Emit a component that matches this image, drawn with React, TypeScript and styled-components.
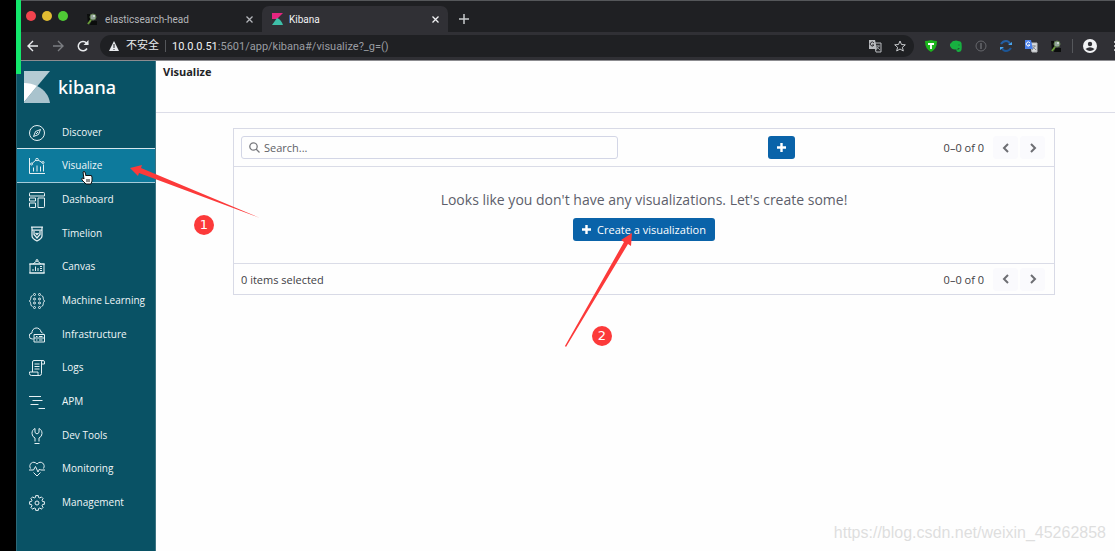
import React from 'react';
import styled, { createGlobalStyle, css } from 'styled-components';

const GlobalStyle = createGlobalStyle`
  * { box-sizing: border-box; }
  body {
    margin: 0;
    background: #000;
    font-family: "Open Sans", "Noto Sans", sans-serif;
    overflow: hidden;
  }
  button, input { font-family: inherit; }
`;

const Page = styled.div`
  position: relative;
  display: flex;
  flex-direction: column;
  min-height: 100vh;
  padding-left: 16px;
  background: #000;
  overflow: hidden;
`;

const GreenBar = styled.div`
  position: absolute;
  top: 0;
  left: 16px;
  width: 5px;
  height: 74px;
  background: #13e86c;
`;

/* ---------- Browser window ---------- */

const Chrome = styled.header`
  color: #e8eaed;
  font-family: Roboto, "Noto Sans CJK SC", sans-serif;
  font-size: 11px;
  border-bottom: 1px solid #8c8c90;
`;

const TabStrip = styled.div`
  display: flex;
  align-items: flex-end;
  height: 32px;
  padding-left: 10px;
  background: #1f2023;
  border-top: 1px solid #55575a;
`;

const Lights = styled.div`
  display: flex;
  gap: 6px;
  width: 45px;
  padding-bottom: 11px;
`;

const Light = styled.span<{ $color: string }>`
  width: 10px;
  height: 10px;
  border-radius: 50%;
  background: ${p => p.$color};
`;

const Tab = styled.div<{ $active?: boolean }>`
  display: flex;
  align-items: center;
  gap: 6px;
  width: 191px;
  height: 26px;
  padding: 0 6px 0 14px;
  color: #b4b6ba;
  font-size: 10px;
  border-radius: 7px 7px 0 0;
  ${p => p.$active && css`
    width: 186px;
    padding-left: 10px;
    color: #f1f2f4;
    background: #303035;
  `}
`;

const TabTitle = styled.span`
  flex: 1;
`;

const IconButton = styled.button`
  display: flex;
  align-items: center;
  justify-content: center;
  flex: none;
  width: 14px;
  height: 14px;
  padding: 0;
  border: 0;
  background: none;
  color: inherit;
`;

const NewTab = styled(IconButton)`
  margin: 0 0 6px 9px;
`;

const Toolbar = styled.div`
  display: flex;
  align-items: center;
  height: 28px;
  padding-left: 10px;
  background: #303035;
`;

const History = styled.div`
  display: flex;
  gap: 11px;
  width: 74px;
`;

const Omnibox = styled.div`
  display: flex;
  align-items: center;
  flex: 1;
  height: 22px;
  padding: 0 7px;
  border-radius: 11px;
  background: #1f2023;
`;

const Security = styled.span`
  margin-left: 5px;
  padding-right: 6px;
  line-height: 12px;
  border-right: 1px solid #55575b;
`;

const Address = styled.span`
  flex: 1;
  margin-left: 6px;
  color: #9a9da2;
  b { color: #f1f2f4; font-weight: 400; }
`;

const OmniIcons = styled.div`
  display: flex;
  gap: 11px;
`;

const Extensions = styled.div`
  display: flex;
  gap: 11px;
  padding-left: 10px;
`;

const Account = styled.div`
  display: flex;
  align-items: center;
  gap: 16px;
  margin-left: 9px;
  padding-left: 10px;
  width: 43px;
  overflow: hidden;
  border-left: 1px solid #55575b;
`;

/* ---------- Application ---------- */

const AppBody = styled.div`
  display: flex;
  flex: 1;
`;

const Sidebar = styled.aside`
  flex: none;
  width: 140px;
  background: #095265;
  border-left: 1px solid #2c6878;
  border-right: 1px solid #3c7483;
`;

const Brand = styled.a`
  display: flex;
  align-items: center;
  gap: 8px;
  height: 54px;
  padding: 0 0 2px 7px;
  color: #fff;
  font-family: "Noto Sans", sans-serif;
  font-size: 18px;
  font-weight: 500;
  text-decoration: none;
`;

const Nav = styled.nav`
  display: grid;
  grid-auto-rows: 1fr;
  height: 404px;
`;

const NavLink = styled.a<{ $active?: boolean }>`
  display: flex;
  align-items: center;
  gap: 17px;
  padding-left: 12px;
  color: #f0f6f8;
  font-size: 10px;
  line-height: 16px;
  white-space: nowrap;
  text-decoration: none;
  svg { position: relative; top: 1px; }
  ${p => p.$active && css`
    background: #0d7a9c;
    box-shadow: 0 -1px #d5e6ec, 0 1px #a5cbd9;
  `}
`;

const Main = styled.main`
  flex: 1;
  min-width: 0;
  background: #fefefe;
  color: #3f4045;
`;

const TitleBar = styled.div`
  height: 52px;
  padding: 3px 7px;
  border-bottom: 1px solid #dcdde8;
`;

const Title = styled.h1`
  margin: 0;
  font-size: 11px;
  line-height: 16px;
  font-weight: 700;
  color: #222327;
`;

const Panel = styled.section`
  margin: 15px 60px 0 77px;
  border: 1px solid #d8dae6;
  font-size: 11px;
`;

const PanelTop = styled.div`
  display: grid;
  grid-template-columns: 377fr 177fr 252fr;
  align-items: center;
  height: 38px;
  padding: 0 7px;
  border-bottom: 1px solid #dadce7;
`;

const SearchBox = styled.label`
  display: flex;
  align-items: center;
  gap: 4px;
  height: 23px;
  padding: 0 7px;
  border: 1px solid #d3d6e6;
  border-radius: 3px;
  color: #77787d;
`;

const SearchInput = styled.input`
  flex: 1;
  min-width: 0;
  padding: 0;
  border: 0;
  outline: 0;
  background: none;
  font-size: 11px;
  &::placeholder { color: #606166; opacity: 1; }
`;

const PrimaryButton = styled.button`
  display: inline-flex;
  align-items: center;
  justify-content: center;
  gap: 6px;
  min-width: 27px;
  height: 23px;
  padding: 0 9px;
  border: 0;
  border-radius: 3px;
  background: #0a63a9;
  color: #fff;
  font-size: 11px;
`;

const AddCell = styled.div`
  display: flex;
  justify-content: flex-end;
`;

const PagerBox = styled.div`
  display: flex;
  align-items: center;
  justify-content: flex-end;
  gap: 2px;
  padding-right: 2px;
`;

const PagerText = styled.span`
  margin-right: 7px;
`;

const PagerButton = styled.button`
  display: flex;
  align-items: center;
  justify-content: center;
  width: 25px;
  height: 23px;
  padding: 0;
  border: 0;
  border-radius: 3px;
  background: #fafafd;
  color: #6d6e73;
`;

const Empty = styled.div`
  display: flex;
  flex-direction: column;
  align-items: center;
  gap: 8px;
  padding: 23px 0 22px;
`;

const EmptyText = styled.p`
  margin: 0;
  font-size: 14px;
  line-height: 20px;
  color: #5d5e6b;
`;

const PanelBottom = styled.div`
  display: flex;
  align-items: center;
  justify-content: space-between;
  height: 31px;
  padding: 0 7px;
  border-top: 1px solid #dadce7;
`;

/* ---------- Annotations over the page ---------- */

const Mark = styled.svg<{ $x: number; $y: number }>`
  position: absolute;
  left: ${p => p.$x}px;
  top: ${p => p.$y}px;
`;

const Badge = styled.span<{ $x: number; $y: number }>`
  position: absolute;
  left: ${p => p.$x}px;
  top: ${p => p.$y}px;
  width: 20px;
  height: 20px;
  border-radius: 50%;
  background: #fc3a3a;
  color: #fff;
  font: 13px/20px "DejaVu Sans", sans-serif;
  text-align: center;
`;

const Watermark = styled.span`
  position: absolute;
  right: 9px;
  bottom: 8px;
  color: #dedede;
  font: 16px/20px "Liberation Sans", sans-serif;
`;

/* ---------- Icons ---------- */

const NavIcon = ({ children }: { children: React.ReactNode }) => (
  <svg width="16" height="16" viewBox="0 0 32 32" fill="none" stroke="#e6f0f3" strokeWidth="2" aria-hidden="true">
    {children}
  </svg>
);

/* Outline of a cog with eight teeth, centred in a 32-unit box. */
const cogPath = Array.from({ length: 8 }, (_, i) => {
  const point = (r: number, deg: number) => {
    const a = ((i * 45 + deg) * Math.PI) / 180;
    return `${(16 + r * Math.cos(a)).toFixed(1)} ${(16 + r * Math.sin(a)).toFixed(1)}`;
  };
  return `${i ? 'L' : 'M'}${point(11.5, -15)}L${point(15, -10)}L${point(15, 10)}L${point(11.5, 15)}`;
}).join('') + 'z';

const items: { label: string; active?: boolean; icon: React.ReactNode }[] = [
  { label: 'Discover', icon: <><circle cx="16" cy="16" r="15" /><path d="M23 9l-4 10-10 4 4-10z" /><path d="M14 18l4-4" /></> },
  { label: 'Visualize', active: true, icon: <><path d="M1 0v31h31M9 27v-8M16 27V15M23 27V17M29 27V13" /><path d="M6 11l8-7M18 4l8 5" /><circle cx="5" cy="12" r="2" /><circle cx="16" cy="3" r="2.500" /><circle cx="28" cy="9" r="2" /></> },
  { label: 'Dashboard', icon: <><path d="M3 1h26a2 2 0 0 1 2 2v5H1V3a2 2 0 0 1 2-2zM1 12h12v6H1zM1 22h12v9H3a2 2 0 0 1-2-2zM18 12h13v17a2 2 0 0 1-2 2H18z" /></> },
  { label: 'Timelion', icon: <><path d="M4 2h24M6 2v18c0 4 4 7 10 10 6-3 10-6 10-10V2M6 8h20" strokeWidth="2.500" /><path d="M10 10v7l6 7 6-7v-7M13 14l3 3 3-3" strokeWidth="2.500" /></> },
  { label: 'Canvas', icon: <><path d="M2 10h28v18H2zM0 10h32M0 28h32M8 10l7-6M24 10l-7-6" /><circle cx="16" cy="3" r="2" /><path d="M8 24v-4M13 24V15M18 24v-6M22 15h4M22 19h4M22 23h4" /></> },
  { label: 'Machine Learning', icon: <><path d="M7 5C3 6 4 10 3 13l-2 3 2 3c1 3 0 7 4 8M25 5c4 1 3 5 4 8l2 3-2 3c-1 3 0 7-4 8" /><circle cx="11" cy="3" r="2" /><circle cx="21" cy="3" r="2" /><circle cx="11" cy="12" r="2" /><circle cx="21" cy="12" r="2" /><circle cx="11" cy="20" r="2" /><circle cx="21" cy="20" r="2" /><circle cx="11" cy="29" r="2" /><circle cx="21" cy="29" r="2" /></> },
  { label: 'Infrastructure', icon: <><path d="M9 24H7a6 6 0 0 1-1-12 9 9 0 0 1 18-2 7 7 0 0 1 4 3" /><path d="M10 15h21v15H10zM10 22h21M14 19h3M14 26h3M20 19h7M20 26h7" /></> },
  { label: 'Logs', icon: <><path d="M7 24V4a3 3 0 0 1 3-3h18a3 3 0 0 1 3 3v4h-6V4a3 3 0 0 1 3-3M25 8v19a4 4 0 0 1-4 4H5a4 4 0 0 1-4-4v-3h17v3a3 3 0 0 0 3 4M11 8h10M11 13h10M11 18h10" /></> },
  { label: 'APM', icon: <path d="M0 5h24M7 13h20M3 21h16M19 29h13" /> },
  { label: 'Dev Tools', icon: <path d="M11 31h10M12 27V20a10 10 0 0 1-6-9c0-5 2-8 6-10v8l4 3 4-3V1c4 2 6 5 6 10a10 10 0 0 1-6 9v7" /> },
  { label: 'Monitoring', icon: <><path d="M3 15C-2 7 8-3 16 6 24-3 34 7 29 15" /><path d="M0 18h9l4-7 5 11 3-6 2 2h9M9 23l7 7 7-7" /></> },
  { label: 'Management', icon: <><path d={cogPath} strokeLinejoin="round" /><circle cx="16" cy="16" r="4" /></> },
];

const KibanaLogo = () => (
  <svg width="26" height="32" viewBox="0 0 26 32" aria-hidden="true">
    <path d="M0 0h26L0 31z" fill="#b5cbd3" />
    <path d="M0 12c5 0 9 1 13 3L0 31z" fill="#fff" />
    <path d="M13 15c8 4 12 10 13 17H0v-1z" fill="#a9c3cd" />
  </svg>
);

const KibanaFavicon = () => (
  <svg width="11" height="12" viewBox="0 0 11 12" aria-hidden="true">
    <path d="M0 0h11L5 6 0 6z" fill="#e5267f" />
    <path d="M5 5c3 1 5 4 6 7H0z" fill="#3ebfa8" />
  </svg>
);

const Magnifier = () => (
  <svg width="14" height="14" viewBox="0 0 14 14" aria-hidden="true">
    <path d="M2 2h3v10H3zM6 9h6v4H5z" fill="#0b0d0c" />
    <circle cx="8" cy="5" r="3" fill="#93a59a" stroke="#5f7d4e" />
    <circle cx="9" cy="4" r="1" fill="#dbe6df" />
    <path d="M6 8l-3 4" stroke="#6a9a3c" strokeWidth="2" />
  </svg>
);

const Cross = () => (
  <svg width="7" height="7" viewBox="0 0 7 7" stroke="currentColor" strokeWidth="1.300"><path d="M.5.5l6 6M6.500.5l-6 6" /></svg>
);

const Arrow = ({ flip, dim }: { flip?: boolean; dim?: boolean }) => (
  <svg width="12" height="12" viewBox="0 0 12 12" fill="none" stroke={dim ? '#7b7d82' : '#e8eaed'} strokeWidth="1.400">
    <path d={flip ? 'M1 6h10M6 1l5 5-5 5' : 'M11 6H1M6 1L1 6l5 5'} />
  </svg>
);

const Plus = () => (
  <svg width="9" height="9" viewBox="0 0 9 9" fill="none" stroke="currentColor" strokeWidth="2.400"><path d="M4.500 0v9M0 4.500h9" /></svg>
);

const Translate = ({ color, back }: { color: string; back: string }) => (
  <svg width="14" height="14" viewBox="0 0 14 14" aria-hidden="true">
    <path d="M6 4h7v9H8z" fill={back} stroke="#b9bbbf" />
    <path d="M1 1h6l2 9H1z" fill={color} />
    <path d="M6 4a2 2 0 1 0 0 2H4" fill="none" stroke={color === '#4a80ea' ? '#fff' : '#303035'} />
    <path d="M8 7h4M10 6v1M11 7l-3 4M9 8l3 3" fill="none" stroke="#8e9196" />
  </svg>
);

const Pager = () => (
  <PagerBox>
    <PagerText>0–0 of 0</PagerText>
    <PagerButton aria-label="Previous page">
      <svg width="8" height="10" viewBox="0 0 8 10" fill="none" stroke="currentColor" strokeWidth="2"><path d="M6 1L2 5l4 4" /></svg>
    </PagerButton>
    <PagerButton aria-label="Next page">
      <svg width="8" height="10" viewBox="0 0 8 10" fill="none" stroke="currentColor" strokeWidth="2"><path d="M2 1l4 4-4 4" /></svg>
    </PagerButton>
  </PagerBox>
);

export default function App() {
  return (
    <Page>
      <GlobalStyle />
      <Chrome>
        <TabStrip>
          <Lights><Light $color="#f2434e" /><Light $color="#e0bb32" /><Light $color="#4fcb35" /></Lights>
          <Tab>
            <Magnifier />
            <TabTitle>elasticsearch-head</TabTitle>
            <IconButton aria-label="Close elasticsearch-head"><Cross /></IconButton>
          </Tab>
          <Tab $active>
            <KibanaFavicon />
            <TabTitle>Kibana</TabTitle>
            <IconButton aria-label="Close Kibana"><Cross /></IconButton>
          </Tab>
          <NewTab aria-label="New tab">
            <svg width="10" height="10" viewBox="0 0 10 10" stroke="#c8cacd" strokeWidth="1.500"><path d="M5 0v10M0 5h10" /></svg>
          </NewTab>
        </TabStrip>
        <Toolbar>
          <History>
            <IconButton aria-label="Back"><Arrow /></IconButton>
            <IconButton aria-label="Forward"><Arrow flip dim /></IconButton>
            <IconButton aria-label="Reload">
              <svg width="12" height="12" viewBox="0 0 12 12" fill="none" stroke="#e8eaed" strokeWidth="1.500"><path d="M10 8.500A4.700 4.700 0 1 1 9.500 3L11 4.500" /><path d="M11.500 0v5h-5z" fill="#e8eaed" stroke="none" /></svg>
            </IconButton>
          </History>
          <Omnibox>
            <svg width="14" height="14" viewBox="0 0 14 14"><path d="M7 2l5 10H2z" fill="#e8eaed" /><path d="M7 5v4M7 10v1" stroke="#1f2023" /></svg>
            <Security>不安全</Security>
            <Address><b>10.0.0.51</b>:5601/app/kibana#/visualize?_g=()</Address>
            <OmniIcons>
              <IconButton aria-label="Translate"><Translate color="#b9bbbf" back="#2a2b2e" /></IconButton>
              <IconButton aria-label="Bookmark">
                <svg width="12" height="12" viewBox="0 0 12 12" fill="none" stroke="#c8cacd"><path d="M6 1l1.500 3.500 3.800.300-2.900 2.500.900 3.700L6 9l-3.300 2 .900-3.700L.700 4.800l3.800-.300z" /></svg>
              </IconButton>
            </OmniIcons>
          </Omnibox>
          <Extensions>
            <IconButton aria-label="Shield">
              <svg width="12" height="12" viewBox="0 0 12 12"><path d="M0 1q3 0 6-1 3 1 6 1 0 8-6 11Q0 9 0 1z" fill="#1cb51c" /><path d="M3 4h6M6 4v5" stroke="#fff" strokeWidth="1.800" /></svg>
            </IconButton>
            <IconButton aria-label="Evernote">
              <svg width="12" height="12" viewBox="0 0 12 12"><path d="M0 4l3-3h1q2-1 4 0 3 0 3.500 2 .500 4 0 7-.500 2-3 2-2.500-.500-2-2.500H5.500Q2 10 0 6z" fill="#17b040" /><path d="M8 10V8.500h1.500M8.500 5h1" stroke="#1f5a30" fill="none" /></svg>
            </IconButton>
            <IconButton aria-label="Site information">
              <svg width="12" height="12" viewBox="0 0 12 12" fill="none" stroke="#66676c"><circle cx="6" cy="6" r="5" /><path d="M6 3v6" strokeWidth="1.500" /></svg>
            </IconButton>
            <IconButton aria-label="Sync">
              <svg width="12" height="12" viewBox="0 0 12 12" fill="none" strokeWidth="2"><path d="M1 4q2-3 5-3 3 0 4 3" stroke="#245fa3" /><path d="M11 8q-2 3-5 3-3 0-4-3" stroke="#1c5696" /><path d="M8 5h4V2zM4 7H0v3z" fill="#4aa5ec" /></svg>
            </IconButton>
            <IconButton aria-label="Google Translate"><Translate color="#4a80ea" back="#d8dadd" /></IconButton>
            <IconButton aria-label="elasticsearch-head"><Magnifier /></IconButton>
          </Extensions>
          <Account>
            <IconButton aria-label="Profile">
              <svg width="14" height="14" viewBox="0 0 14 14"><circle cx="7" cy="7" r="7" fill="#f1f2f4" /><circle cx="7" cy="5" r="2.200" fill="#303035" /><path d="M2.500 10Q7 6.500 11.500 10 7 14 2.500 10z" fill="#303035" /></svg>
            </IconButton>
            <IconButton aria-label="Menu">
              <svg width="14" height="14" viewBox="0 0 14 14" fill="#e8eaed"><circle cx="2" cy="3" r="1" /><circle cx="2" cy="7" r="1" /><circle cx="2" cy="11" r="1" /></svg>
            </IconButton>
          </Account>
        </Toolbar>
      </Chrome>

      <AppBody>
        <Sidebar>
          <Brand href="#"><KibanaLogo />kibana</Brand>
          <Nav>
            {items.map(item => (
              <NavLink key={item.label} href="#" $active={item.active}>
                <NavIcon>{item.icon}</NavIcon>
                {item.label}
              </NavLink>
            ))}
          </Nav>
        </Sidebar>
        <Main>
          <TitleBar><Title>Visualize</Title></TitleBar>
          <Panel>
            <PanelTop>
              <SearchBox>
                <svg width="11" height="11" viewBox="0 0 11 11" fill="none" stroke="currentColor" strokeWidth="1.300"><circle cx="4.500" cy="4.500" r="3.700" /><path d="M7 7l3.500 3.500" /></svg>
                <SearchInput type="text" placeholder="Search..." aria-label="Search" />
              </SearchBox>
              <AddCell><PrimaryButton aria-label="Create new visualization"><Plus /></PrimaryButton></AddCell>
              <Pager />
            </PanelTop>
            <Empty>
              <EmptyText>Looks like you don't have any visualizations. Let's create some!</EmptyText>
              <PrimaryButton><Plus />Create a visualization</PrimaryButton>
            </Empty>
            <PanelBottom>
              <span>0 items selected</span>
              <Pager />
            </PanelBottom>
          </Panel>
        </Main>
      </AppBody>

      <GreenBar />
      <Mark $x={130} $y={164} width="130" height="54" viewBox="0 0 130 54">
        <path d="M0 4L12 1l-1 3L130 54 9 9l-1 3z" fill="#fc3a3a" />
      </Mark>
      <Mark $x={564} $y={233} width="70" height="114" viewBox="0 0 70 114">
        <path d="M68 0L67 13l-3-2L2 114 1 113 60 9l-3-2z" fill="#fc3a3a" />
      </Mark>
      <Mark $x={81} $y={171} width="12" height="14" viewBox="0 0 12 14">
        <path d="M2 1q1-1 2 0l1 4 1-1 1 1 1-1 1 1 1-1 1 2v4l-1 3H5L1 9q-1-2 1-2l1 1z" fill="#fff" stroke="#111" />
        <path d="M6 8v3M8 8v3" stroke="#111" />
      </Mark>
      <Badge $x={194} $y={215}>1</Badge>
      <Badge $x={592} $y={326}>2</Badge>
      <Watermark>https://blog.csdn.net/weixin_45262858</Watermark>
    </Page>
  );
}
